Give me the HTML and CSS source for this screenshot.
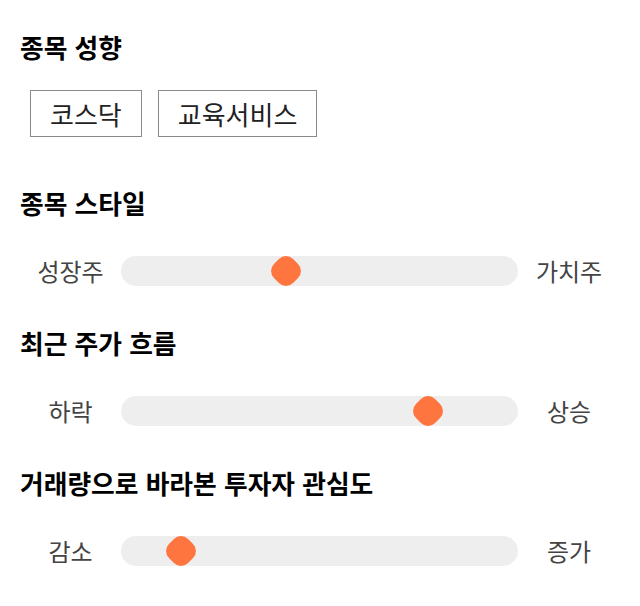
FILE: index.html
```html
<!DOCTYPE html>
<html lang="ko">
<head>
    <meta charset="UTF-8">
    <meta name="viewport" content="width=device-width, initial-scale=1.0">
    <title>종목 분석</title>
    <link rel="stylesheet" href="styles.css">
</head>
<body>
    <div class="container">
        <section class="section">
            <h2>종목 성향</h2>
            <div class="tags">
                <span class="tag">코스닥</span>
                <span class="tag">교육서비스</span>
            </div>
        </section>

        <section class="section">
            <h2>종목 스타일</h2>
            <div class="slider-row">
                <span class="label">성장주</span>
                <div class="track"><span class="thumb" style="left: 41.6%;"></span></div>
                <span class="label">가치주</span>
            </div>
        </section>

        <section class="section">
            <h2>최근 주가 흐름</h2>
            <div class="slider-row">
                <span class="label">하락</span>
                <div class="track"><span class="thumb" style="left: 77.3%;"></span></div>
                <span class="label">상승</span>
            </div>
        </section>

        <section class="section">
            <h2>거래량으로 바라본 투자자 관심도</h2>
            <div class="slider-row">
                <span class="label">감소</span>
                <div class="track"><span class="thumb" style="left: 15.1%;"></span></div>
                <span class="label">증가</span>
            </div>
        </section>
    </div>
</body>
</html>
```

FILE: styles.css
```css
body {
    font-family: "Noto Sans CJK KR", "Noto Sans", sans-serif;
    margin: 0;
    padding: 0;
    background-color: #fff;
    color: #111;
}
.container {
    padding: 32px 20px;
    display: flex;
    flex-direction: column;
    gap: 42px;
}
.section h2 {
    margin: 0;
    font-size: 25.75px;
    line-height: 30px;
    font-weight: bold;
    color: #000;
}
.tags {
    display: flex;
    gap: 16px;
    margin: 28px 0 9px;
    padding-left: 10px;
}
.tag {
    box-sizing: border-box;
    height: 47px;
    padding: 0 19px;
    border: 1px solid #8a8a8a;
    font-size: 26px;
    line-height: 45px;
    color: #222;
}
.slider-row {
    display: grid;
    grid-template-columns: 101px 1fr 102px;
    align-items: center;
    height: 30px;
    margin-top: 38px;
}
.label {
    text-align: center;
    font-size: 24px;
    line-height: 30px;
    color: #444;
}
.track {
    position: relative;
    height: 30px;
    border-radius: 15px;
    background-color: #eeeeee;
}
.thumb {
    position: absolute;
    top: 50%;
    width: 27px;
    height: 27px;
    border-radius: 10px;
    background-color: #ff7540;
    transform: translate(-50%, -50%) rotate(45deg);
}
```
